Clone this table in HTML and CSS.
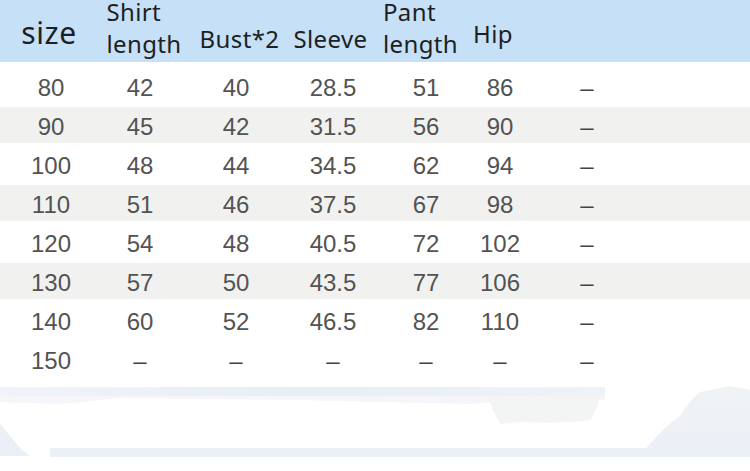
FILE: index.html
```html
<!DOCTYPE html>
<html lang="en">
<head>
<meta charset="utf-8">
<title>Size chart</title>
<link rel="stylesheet" href="styles.css">
</head>
<body>
<div class="chart">
  <div class="head">
    <div class="hc c-size"><span>size</span></div>
    <div class="hc two"><span>Shirt<br>length</span></div>
    <div class="hc one"><span>Bust*2</span></div>
    <div class="hc one"><span>Sleeve</span></div>
    <div class="hc two"><span>Pant<br>length</span></div>
    <div class="hc c-hip"><span>Hip</span></div>
    <div class="hc"></div>
  </div>
  <div class="spacer"></div>
  <div class="row"><div class="c">80</div><div class="c">42</div><div class="c">40</div><div class="c">28.5</div><div class="c">51</div><div class="c">86</div><div class="c d">–</div></div>
  <div class="row alt"><div class="c">90</div><div class="c">45</div><div class="c">42</div><div class="c">31.5</div><div class="c">56</div><div class="c">90</div><div class="c d">–</div></div>
  <div class="row"><div class="c">100</div><div class="c">48</div><div class="c">44</div><div class="c">34.5</div><div class="c">62</div><div class="c">94</div><div class="c d">–</div></div>
  <div class="row alt"><div class="c">110</div><div class="c">51</div><div class="c">46</div><div class="c">37.5</div><div class="c">67</div><div class="c">98</div><div class="c d">–</div></div>
  <div class="row"><div class="c">120</div><div class="c">54</div><div class="c">48</div><div class="c">40.5</div><div class="c">72</div><div class="c">102</div><div class="c d">–</div></div>
  <div class="row alt"><div class="c">130</div><div class="c">57</div><div class="c">50</div><div class="c">43.5</div><div class="c">77</div><div class="c">106</div><div class="c d">–</div></div>
  <div class="row"><div class="c">140</div><div class="c">60</div><div class="c">52</div><div class="c">46.5</div><div class="c">82</div><div class="c">110</div><div class="c d">–</div></div>
  <div class="row"><div class="c">150</div><div class="c d">–</div><div class="c d">–</div><div class="c d">–</div><div class="c d">–</div><div class="c d">–</div><div class="c d">–</div></div>
  <svg class="deco" width="750" height="91" viewBox="0 0 750 91" aria-hidden="true">
    <defs>
      <linearGradient id="band" x1="0" x2="1" y1="0" y2="0">
        <stop offset="0" stop-color="#f0f4f9"/>
        <stop offset="0.5" stop-color="#e8eef6"/>
        <stop offset="1" stop-color="#eef3f8"/>
      </linearGradient>
      <linearGradient id="mount" x1="0" x2="0" y1="0" y2="1">
        <stop offset="0" stop-color="#f0f3f4"/>
        <stop offset="1" stop-color="#ebf0f7"/>
      </linearGradient>
    </defs>
    <rect x="0" y="7" width="605" height="9" fill="url(#band)"/>
    <path d="M0 16 L605 16 L605 20 Q560 22 520 20 L470 24 L300 20 L120 18 L60 24 L0 22 Z" fill="#f4f6fa"/>
    <path d="M488 16 L600 16 Q598 28 590 40 Q560 44 520 42 L500 44 Q492 30 488 16 Z" fill="#f3f5f5"/>
    <path d="M640 76 Q660 50 680 36 Q690 20 700 12 L730 6 L750 10 L750 76 Z" fill="url(#mount)"/>
    <path d="M0 44 Q10 56 22 70 L30 76 L0 76 Z" fill="#ebf0f6"/>
    <rect x="50" y="68" width="700" height="9" fill="#ebf0f7"/>
  </svg>
</div>
</body>
</html>
```

FILE: styles.css
```css
html, body {
  margin: 0;
  padding: 0;
  background: #ffffff;
}

.chart {
  width: 750px;
  height: 471px;
  overflow: hidden;
}

.head {
  display: grid;
  grid-template-columns: 98px 92px 99px 83px 97px 48px 1fr;
  height: 62px;
  background: #c5e0f7;
  font-family: "Noto Sans", "Open Sans", sans-serif;
  font-size: 24px;
  line-height: 32px;
  letter-spacing: 0.4px;
  color: #1d1f22;
}

.hc {
  display: flex;
  justify-content: center;
  align-items: flex-start;
  white-space: nowrap;
}

.hc span {
  text-align: left;
}

.hc.two span {
  margin-top: -4px;
}

.hc.one span {
  margin-top: 23px;
}

.c-size span {
  font-size: 30px;
  letter-spacing: 0.6px;
  margin-top: 17px;
}

.c-hip span {
  margin-top: 18px;
}

.spacer {
  height: 6px;
}

.row {
  display: grid;
  grid-template-columns: 102px 76px 116px 78px 108px 40px 134px 1fr;
  height: 39px;
  font-family: "Liberation Sans", Arial, sans-serif;
  font-size: 24px;
  color: #535353;
}

.row.alt {
  background: linear-gradient(to bottom, #f1f2f0 0, #f1f2f0 36px, #ffffff 36px);
}

.c {
  display: flex;
  justify-content: center;
  align-items: center;
  white-space: nowrap;
}

.c.d {
  color: #444444;
}

.deco {
  display: block;
}
```
